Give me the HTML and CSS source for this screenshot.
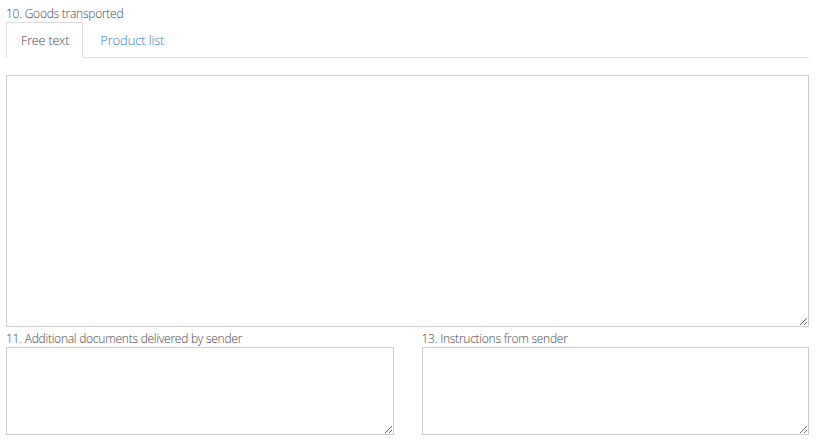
FILE: index.html
```html
<!DOCTYPE html>
<html lang="en">
<head>
<meta charset="UTF-8">
<meta name="viewport" content="width=device-width, initial-scale=1.0">
<title>Consignment note</title>
<link rel="stylesheet" href="styles.css">
</head>
<body>
<main class="form">
  <label class="field-label">10. Goods transported</label>
  <ul class="tabs">
    <li class="tab active">Free text</li>
    <li class="tab">Product list</li>
  </ul>
  <textarea class="goods"></textarea>
  <div class="row">
    <div class="col">
      <label class="field-label small-gap">11. Additional documents delivered by sender</label>
      <textarea class="small"></textarea>
    </div>
    <div class="col">
      <label class="field-label small-gap">13. Instructions from sender</label>
      <textarea class="small"></textarea>
    </div>
  </div>
</main>
</body>
</html>
```

FILE: styles.css
```css
body {
  margin: 0;
  padding: 0;
  font-family: "Open Sans", Arial, sans-serif;
  font-size: 12px;
  font-weight: 300;
  color: #444;
  background: #fff;
}
.form {
  width: 803px;
  padding: 5px 0 0 6px;
}
.field-label {
  display: block;
  line-height: 17px;
  letter-spacing: -0.25px;
  color: #444;
}
.small-gap {
  padding-top: 4px;
  line-height: 16px;
}
.tabs {
  list-style: none;
  margin: 0;
  padding: 0;
  display: flex;
  border-bottom: 1px solid #ddd;
}
.tab {
  padding: 0 13px 0 14px;
  height: 34px;
  line-height: 35px;
  margin-bottom: -1px;
  border: 1px solid transparent;
  color: #337ab7;
  font-size: 12.5px;
  letter-spacing: -0.15px;
}
.tab + .tab {
  padding-left: 16px;
  font-size: 13px;
}
.tab.active {
  color: #444;
  background: #fff;
  border-color: #ddd #ddd #fff;
}
textarea {
  display: block;
  box-sizing: border-box;
  width: 100%;
  margin: 0;
  border: 1px solid #ccc;
  font-family: inherit;
}
.goods {
  margin-top: 17px;
  height: 252px;
}
.row {
  display: flex;
  gap: 28px;
}
.col {
  flex: 1;
}
.small {
  height: 88px;
}
```
